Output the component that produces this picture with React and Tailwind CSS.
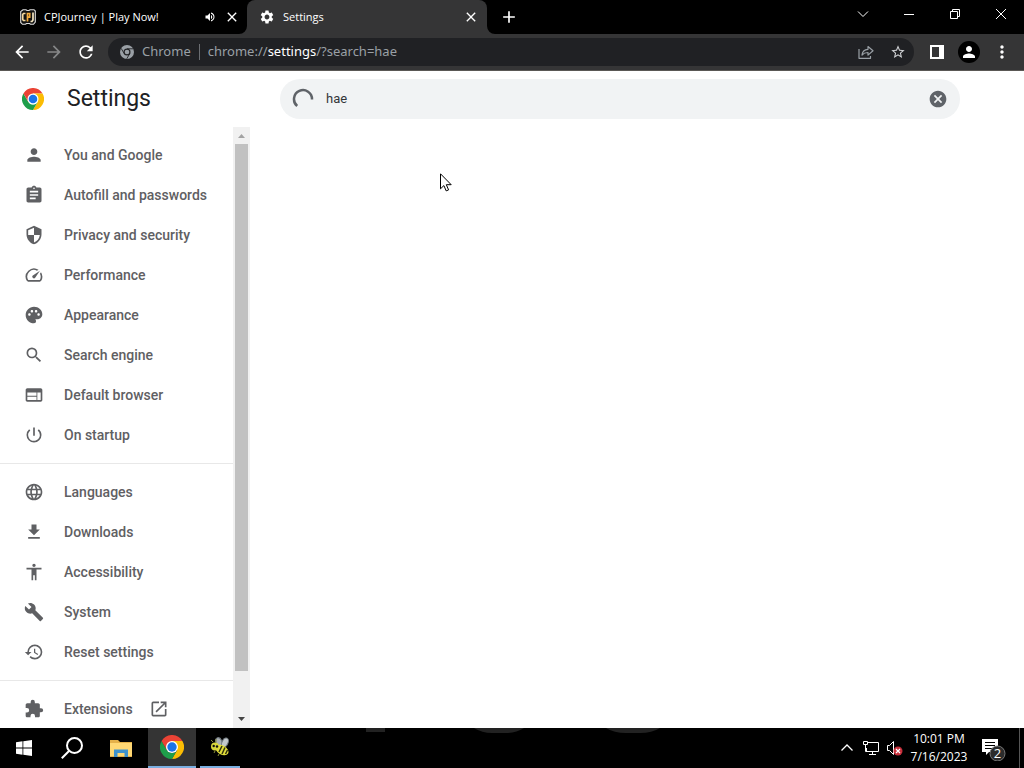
import React from "react";
import {
  MdPerson, MdSecurity, MdSpeed, MdPalette, MdSearch, MdWeb, MdPowerSettingsNew,
  MdLanguage, MdFileDownload, MdAccessibility, MdBuild, MdRestore, MdOpenInNew,
  MdCancel, MdArrowBack, MdArrowForward, MdRefresh, MdSettings, MdClose, MdAdd, MdStarBorder,
  MdMoreVert, MdVolumeUp,
} from "react-icons/md";

const uiFont = "font-['Open_Sans','Noto_Sans',sans-serif]";

function ChromeLogo({ className }) {
  return (
    <svg viewBox="0 0 48 48" className={className} aria-hidden="true">
      <path fill="#ea4335" d="M24 24 3.2 12A24 24 0 0 1 44.8 12H24Z" />
      <path fill="#fbbc04" d="M24 12h20.8A24 24 0 0 1 24 48l10.4-18Z" />
      <path fill="#1e9e4a" d="M3.2 12A24 24 0 0 0 24 48l10.4-18A12 12 0 0 1 13.6 30Z" />
      <path fill="#ea4335" d="M3.2 12 13.6 30 24 24V12Z" />
      <circle cx="24" cy="24" r="12" fill="#fff" />
      <circle cx="24" cy="24" r="9.4" fill="#1a73e8" />
    </svg>
  );
}

function ChromeGlyph({ className }) {
  return (
    <svg viewBox="0 0 48 48" className={className} aria-hidden="true">
      <circle cx="24" cy="24" r="24" fill="#9aa0a6" />
      <circle cx="24" cy="24" r="12" fill="#202124" />
      <path d="M24 13h21M14.500 29.500 4 11.500M33.500 29.500 23 47.500" stroke="#202124" strokeWidth="3" fill="none" />
      <circle cx="24" cy="24" r="8" fill="#9aa0a6" />
    </svg>
  );
}

function ClipboardIcon({ className }) {
  return (
    <svg viewBox="0 0 24 24" className={className} fill="currentColor" aria-hidden="true">
      <path fillRule="evenodd" d="M19 3h-4.180C14.400 1.840 13.300 1 12 1s-2.400.84-2.820 2H5c-1.100 0-2 .9-2 2v14c0 1.100.9 2 2 2h14c1.100 0 2-.9 2-2V5c0-1.100-.9-2-2-2zm-7 0c.55 0 1 .45 1 1s-.45 1-1 1-1-.45-1-1 .45-1 1-1zm2 14H7v-2h7v2zm3-4H7v-2h10v2zm0-4H7V7h10v2z" />
    </svg>
  );
}

function PuzzleIcon({ className }) {
  return (
    <svg viewBox="0 0 24 24" className={className} fill="currentColor" aria-hidden="true">
      <path d="M20.500 11H19V7c0-1.100-.9-2-2-2h-4V3.500a2.500 2.500 0 0 0-5 0V5H4c-1.100 0-2 .9-2 2v3.800h1.500a2.700 2.700 0 0 1 0 5.400H2V20c0 1.100.9 2 2 2h3.800v-1.500a2.700 2.700 0 0 1 5.400 0V22H17c1.100 0 2-.9 2-2v-4h1.500a2.500 2.500 0 0 0 0-5z" />
    </svg>
  );
}

function JourneyIcon() {
  return (
    <svg viewBox="0 0 16 16" className="size-4 shrink-0" aria-hidden="true">
      <path d="M3 .7h3l1 .8h2l1-.8h4l1.300 1.300v11L13.500 15.300h-3L9.500 14.500h-3l-1 .8H2.500L.7 13.500V2.500Z" fill="#111" stroke="#ddd" strokeWidth="1.100" />
      <path d="M5.500 4.500H3.500L2.700 5.500v5l.8 1h2" fill="none" stroke="#f5d9a0" strokeWidth="1.700" />
      <path d="M7.500 12.500V4.500h2.200v3.600H7.500" fill="none" stroke="#f2a93b" strokeWidth="1.700" />
      <path d="M13 3.500v7.500l-1 1.500h-1.500" fill="none" stroke="#f5e6c0" strokeWidth="1.700" />
    </svg>
  );
}

function Tab({ children }) {
  return <div className="flex h-full w-60 shrink-0 items-center px-3">{children}</div>;
}

function TabStrip() {
  const caption = "flex h-7 w-[46px] items-center justify-center";
  return (
    <header className="flex h-[34px] shrink-0 bg-black text-white">
      <div className="w-2 shrink-0" />
      <Tab>
        <JourneyIcon />
        <span className="ml-2 flex-1 text-[11px]">CPJourney | Play Now!</span>
        <MdVolumeUp className="size-3 shrink-0" />
        <button aria-label="Close CPJourney" className="-mr-1 ml-2 shrink-0"><MdClose className="size-4" /></button>
      </Tab>
      <div className="relative -ml-px h-full shrink-0 rounded-t-lg bg-[#353536]">
        <svg viewBox="0 0 8 8" className="absolute bottom-0 -left-2 size-2" aria-hidden="true"><path d="M8 0v8H0a8 8 0 0 0 8-8Z" fill="#353536" /></svg>
        <svg viewBox="0 0 8 8" className="absolute -right-2 bottom-0 size-2" aria-hidden="true"><path d="M0 0v8h8a8 8 0 0 1-8-8Z" fill="#353536" /></svg>
        <Tab>
          <MdSettings className="size-4 shrink-0" />
          <span className="ml-2 flex-1 text-[11px]">Settings</span>
          <button aria-label="Close Settings" className="-mr-1 shrink-0"><MdClose className="size-4" /></button>
        </Tab>
      </div>
      <button aria-label="New tab" className="ml-3 shrink-0"><MdAdd className="size-5" /></button>
      <div className="flex-1" />
      <div className="flex">
        <button aria-label="Search tabs" className={caption}>
          <svg viewBox="0 0 12 12" className="size-3" fill="none" stroke="#fff"><path d="m1 3.500 5 5 5-5" /></svg>
        </button>
        <button aria-label="Minimize" className={caption}>
          <svg viewBox="0 0 12 12" className="size-3" fill="none" stroke="#fff"><path d="M1 6.500h10" /></svg>
        </button>
        <button aria-label="Restore" className={caption}>
          <svg viewBox="0 0 12 12" className="size-3" fill="none" stroke="#fff"><path d="M1.500 3.500h7v7h-7zM3.500 3.500v-2h7v7h-2" /></svg>
        </button>
        <button aria-label="Close window" className={caption}>
          <svg viewBox="0 0 12 12" className="size-3" fill="none" stroke="#fff"><path d="m1 1 10 10M11 1 1 11" /></svg>
        </button>
      </div>
    </header>
  );
}

function Toolbar() {
  return (
    <div className="flex h-[37px] shrink-0 items-center border-b border-[#5a5855] bg-[#353536] pr-3 pl-3 text-white">
      <button aria-label="Back"><MdArrowBack className="size-5" /></button>
      <button aria-label="Forward" className="ml-3 text-[#868788]"><MdArrowForward className="size-5" /></button>
      <button aria-label="Reload" className="ml-3"><MdRefresh className="size-5" /></button>
      <div className="ml-3 flex h-7 min-w-0 flex-1 items-center rounded-full bg-[#202124] px-2 font-['Noto_Sans','Open_Sans',sans-serif] text-[13px] text-[#9aa0a6]">
        <ChromeGlyph className="ml-1 size-[14px] shrink-0" />
        <span className="ml-2">Chrome</span>
        <span className="mx-2 h-4 w-px bg-[#6b6e72]" />
        <span className="flex-1 truncate">chrome://<span className="text-white">settings</span>/?search=hae</span>
        <button aria-label="Share this page">
          <svg viewBox="0 0 16 16" className="size-4" fill="none" stroke="#9aa0a6" strokeWidth="1.200" strokeLinejoin="round">
            <path d="M1 5v9.300h11.500V12" />
            <path d="M4 11c.3-3.800 2.500-5.500 6-5.700V2.500l5 4.300-5 4.300V8.500C7.200 8.500 5.500 9.200 4 11Z" />
          </svg>
        </button>
        <button aria-label="Bookmark this tab" className="ml-4 text-[#d0d2d5]"><MdStarBorder className="size-4" /></button>
      </div>
      <button aria-label="Side panel" className="ml-4">
        <svg viewBox="0 0 14 14" className="size-[14px]"><path d="M0 0h14v14H0zM2 2v10h7V2z" fill="#fff" fillRule="evenodd" /></svg>
      </button>
      <button aria-label="Profile" className="ml-3.5 flex size-[22px] items-center justify-center rounded-full bg-black"><MdPerson className="size-[18px]" /></button>
      <button aria-label="Menu" className="ml-3"><MdMoreVert className="size-5" /></button>
    </div>
  );
}

const groups = [
  [
    [MdPerson, "You and Google"],
    [ClipboardIcon, "Autofill and passwords"],
    [MdSecurity, "Privacy and security"],
    [MdSpeed, "Performance"],
    [MdPalette, "Appearance"],
    [MdSearch, "Search engine"],
    [MdWeb, "Default browser"],
    [MdPowerSettingsNew, "On startup"],
  ],
  [
    [MdLanguage, "Languages"],
    [MdFileDownload, "Downloads"],
    [MdAccessibility, "Accessibility"],
    [MdBuild, "System"],
    [MdRestore, "Reset settings"],
  ],
  [[PuzzleIcon, "Extensions", true]],
];

function Sidebar() {
  return (
    <aside className="flex w-[250px] shrink-0 flex-col">
      <div className="flex h-14 shrink-0 items-center pl-[22px]">
        <ChromeLogo className="size-[22px]" />
        <h1 className="ml-[23px] text-[23px] text-[#202124]">Settings</h1>
      </div>
      <div className="flex min-h-0 flex-1">
        <nav className="min-w-0 flex-1 overflow-hidden pt-2">
          {groups.map((items, g) => (
            <ul key={g} className={g ? "mt-2 border-t border-[#e8e8e8] pt-2" : ""}>
              {items.map(([Icon, label, external]) => (
                <li key={label}>
                  <a href="#" className="flex h-10 items-center pl-6 text-[14px] font-medium text-[#5f6063]">
                    <Icon className="size-5 shrink-0" />
                    <span className="ml-5">{label}</span>
                    {external && <MdOpenInNew className="ml-4 size-5" />}
                  </a>
                </li>
              ))}
            </ul>
          ))}
        </nav>
        <div className="flex w-[17px] shrink-0 flex-col items-center bg-[#f1f1f1]" aria-hidden="true">
          <svg viewBox="0 0 17 17" className="size-[17px] shrink-0"><path d="M5 11h7L8.500 7Z" fill="#a3a3a3" /></svg>
          <div className="w-[13px] flex-[527] bg-[#c1c1c1]" />
          <div className="flex-[40]" />
          <svg viewBox="0 0 17 17" className="size-[17px] shrink-0"><path d="M5 6h7l-3.500 4Z" fill="#444" /></svg>
        </div>
      </div>
    </aside>
  );
}

function Main() {
  return (
    <main className="relative min-w-0 flex-1 pr-16 pl-[30px]">
      <div className="flex h-14 items-center">
        <label className="flex h-10 min-w-0 flex-1 items-center rounded-full bg-[#f1f3f4] px-3">
          <svg viewBox="0 0 22 22" className="size-[22px] shrink-0" fill="none" stroke="#5f6368" strokeWidth="2.500" aria-hidden="true"><path d="M5.200 18A9 9 0 1 1 20 11.500" /></svg>
          <input aria-label="Search settings" defaultValue="hae" className="ml-3 min-w-0 flex-1 bg-transparent text-[13px] text-[#333639] outline-none" />
          <button aria-label="Clear search" className="text-[#5f6368]"><MdCancel className="size-5" /></button>
        </label>
      </div>
      <svg viewBox="0 0 12 19" className="absolute top-[102px] left-[190px] h-[19px] w-3" aria-hidden="true">
        <path d="M.5.8v15l3.400-3.200 2.300 5.300 2.400-1-2.300-5.200h4.900Z" fill="#fff" stroke="#000" />
      </svg>
    </main>
  );
}

function Taskbar() {
  const app = "flex h-full w-12 items-center justify-center";
  return (
    <footer className="flex h-10 shrink-0 bg-black text-white">
      <button aria-label="Start" className={app}>
        <svg viewBox="0 0 16 16" className="size-4"><path fill="#fff" d="M0 2.200 6.500 1.300v6.300H0zM7.300 1.200 16 0v7.600H7.300zM0 8.400h6.500v6.300L0 13.800zM7.300 8.400H16V16l-8.700-1.200z" /></svg>
      </button>
      <button aria-label="Search" className={app}>
        <svg viewBox="0 0 22 22" className="size-[22px]" fill="none" stroke="#fff" strokeWidth="2"><circle cx="13.500" cy="8.500" r="7.500" /><path d="M8 14 .8 21.200" /></svg>
      </button>
      <button aria-label="File Explorer" className="mr-0.5 flex h-full w-[50px] items-center justify-center">
        <svg viewBox="0 0 22 18" className="h-[18px] w-[22px]"><path d="M0 1h8l2 2h12v15H0z" fill="#e5b14a" /><path d="M0 4h22v13H0z" fill="#ffd874" /><path d="M4 18V10.500h14V18h-3.500v-4h-7v4z" fill="#3f92cc" /></svg>
      </button>
      <button aria-label="Google Chrome" className={`${app} border-b-2 border-[#7aaee0] bg-[#343434]`}><ChromeLogo className="size-6" /></button>
      <button aria-label="Bee" className={`${app} px-1`}>
        <span className="flex h-full w-10 items-center justify-center border-b-2 border-[#7aaee0]">
          <svg viewBox="0 0 20 20" className="size-5">
            <ellipse cx="9" cy="5" rx="3" ry="4.500" fill="#a9b0b5" stroke="#70787e" transform="rotate(-25 9 5)" />
            <ellipse cx="15" cy="5.500" rx="3" ry="4.800" fill="#c3c9cc" stroke="#70787e" transform="rotate(25 15 5.500)" />
            <ellipse cx="12" cy="13" rx="7" ry="4.500" fill="#e3df3c" transform="rotate(30 12 13)" />
            <path d="m12 9-3 6M15 10.500l-3 6.500M17.500 13l-2 4" stroke="#33330f" strokeWidth="1.500" />
            <circle cx="5" cy="9.500" r="4" fill="#d8d83a" />
            <circle cx="3.700" cy="9" r="1.200" fill="#111" /><circle cx="7" cy="9.500" r="1.200" fill="#111" />
            <path d="M3 5 1 3M6 5V2M5 14l-1 2M9 17l-1 2" stroke="#8a8f3a" />
          </svg>
        </span>
      </button>
      <div className="flex-1 pl-[122px]">
        <svg viewBox="0 0 300 6" className="h-1.5 w-[300px]" fill="#222" aria-hidden="true">
          <path d="M0 0h19v4H0zM108 0h50q-8 5-18 5h-14q-10 0-18-5zM240 0h54q-8 5-20 5h-14q-12 0-20-5z" />
        </svg>
      </div>
      <div className="flex items-center">
        <button aria-label="Show hidden icons">
          <svg viewBox="0 0 14 14" className="size-[14px]" fill="none" stroke="#fff" strokeWidth="1.300"><path d="m1.500 9.500 5.500-5.500 5.500 5.500" /></svg>
        </button>
        <button aria-label="Network" className="ml-2">
          <svg viewBox="0 0 18 16" className="h-4 w-[18px]" fill="none" stroke="#fff"><path d="M6 2.500h10.500v9h-12V8M7 14.500h7M10.500 12v2.500M1.500 1.500h4v3h-4zM3.500 5v6.500h1.500" /></svg>
        </button>
        <button aria-label="Volume muted" className="ml-1.5">
          <svg viewBox="0 0 17 16" className="h-4 w-[17px]" fill="none"><path d="M1.500 5.500h2l4-4v13l-4-4h-2z" stroke="#fff" /><circle cx="12" cy="11" r="4.500" fill="#c9303c" /><path d="m10 9 4 4M14 9l-4 4" stroke="#fff" strokeWidth="1.200" /></svg>
        </button>
        <div className="ml-1.5 w-[60px] text-center text-[12px] leading-[18px] whitespace-nowrap"><div>10:01 PM</div><div>7/16/2023</div></div>
        <button aria-label="2 notifications" className="ml-3 w-[38px]">
          <svg viewBox="0 0 26 26" className="size-[26px]">
            <path d="M1 4h16v13H8l-3 3v-3H1z" fill="#fff" />
            <path d="M4 7.500h10M4 10.500h10M4 13.500h7" stroke="#000" />
            <circle cx="16.500" cy="18.500" r="7.500" fill="#2b2b2b" stroke="#777" />
            <text x="16.500" y="23" textAnchor="middle" fontSize="13" fill="#fff">2</text>
          </svg>
        </button>
        <div className="h-full w-[5px] border-l border-[#555]" />
      </div>
    </footer>
  );
}

export default function App() {
  return (
    <div className={`flex h-screen flex-col overflow-hidden bg-white ${uiFont}`}>
      <TabStrip />
      <Toolbar />
      <div className="flex min-h-0 flex-1 font-[Roboto,sans-serif]">
        <Sidebar />
        <Main />
      </div>
      <Taskbar />
    </div>
  );
}
